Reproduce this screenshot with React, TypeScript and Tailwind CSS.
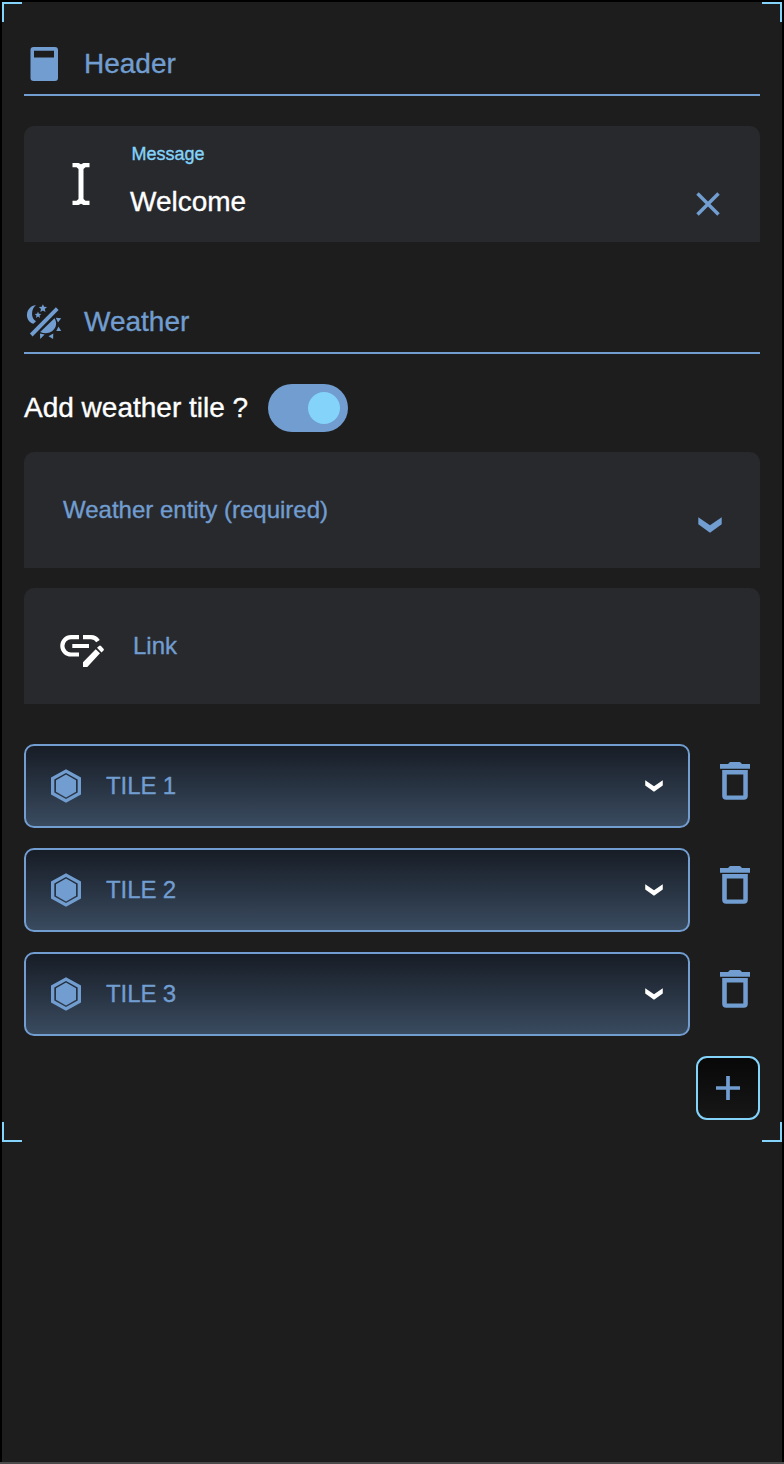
import React from "react";

const Corner = ({ className }: { className: string }) => (
  <span className={`absolute size-5 border-[#83d3fa] ${className}`} />
);

function SectionTitle({ icon, title }: { icon: React.ReactNode; title: string }) {
  return (
    <div className="flex h-[66px] items-start border-b-2 border-[#719dd0] text-[#719dd0]">
      <span className="flex size-10 shrink-0">{icon}</span>
      <h2 className="mt-5 ml-5 text-[28px] leading-7">{title}</h2>
    </div>
  );
}

const HeaderIcon = () => (
  <svg width="40" height="60" viewBox="0 0 40 60" className="shrink-0" fill="currentColor">
    <path fillRule="evenodd" d="M9.500 17H31a3 3 0 0 1 3 3V48a3 3 0 0 1-3 3H9.500a3 3 0 0 1-3-3V20a3 3 0 0 1 3-3ZM10 20.800V27.500H30V20.800Z" />
  </svg>
);

const WeatherIcon = () => (
  <svg width="40" height="60" viewBox="0 0 40 60" className="shrink-0" fill="currentColor">
    <path d="M12 17C1 18.500 0 33 9.500 35.800l2.500-2.600C6.500 30 7 21 12 17Z" />
    <path d="m18.900 16.200 1.200 2.600 2.900.3-2.200 1.900.7 2.900-2.600-1.500-2.600 1.500.7-2.900-2.200-1.900 2.900-.3ZM14 23.600l.9 2.200 2.400.2-1.800 1.600.6 2.300-2.100-1.300-2.100 1.300.6-2.300-1.800-1.600 2.400-.2Z" />
    <path d="m31.900 19.300 2.700 2.700L8.600 48.400 5.900 45.600Z" />
    <path d="M30.500 30.300c5.500 8.500-3.500 18.500-14.300 13.700ZM31.800 29.800l5.400.4-3.200 4.300ZM32.300 43l2.200-4.400 2.700 4.400ZM16 45.600l4.600 1-4.400 4.400ZM24.500 48.200l4.800-2.600-.2 5.400Z" />
  </svg>
);

const Chevron = ({ large = false }: { large?: boolean }) => (
  <svg width={large ? 24 : 18} height={large ? 16 : 12} viewBox="0 0 24 16" fill="currentColor">
    <path d="M.3.300 12 8.300 23.700.300V7.200L12 15.800.300 7.200Z" />
  </svg>
);

function Tile({ label }: { label: string }) {
  return (
    <div className="flex h-[84px] items-start text-[#719dd0]">
      <button className="flex h-full w-[666px] items-center rounded-[10px] border-2 border-[#719dd0] bg-linear-to-b from-[#171d26] to-[#3a4b60] pr-[25px] pl-6">
        <svg width="32" height="34" viewBox="0 0 32 34" fill="currentColor">
          <path fillRule="evenodd" d="M16 .2 31 8.500V25.500L16 33.800 1 25.500V8.500ZM16 4 4.300 10.500V23.500L16 30 27.700 23.500V10.500Z" />
          <path d="M16 5.500 26 11.200V22.800L16 28.500 6 22.800V11.200Z" />
        </svg>
        <span className="ml-6 text-2xl leading-6 tracking-[-0.1px]">{label}</span>
        <span className="ml-auto text-white"><Chevron /></span>
      </button>
      <button aria-label={`Delete ${label}`} className="mt-[17px] ml-[30px]">
        <svg width="30" height="40" viewBox="0 0 30 40" fill="currentColor">
          <path d="M0 3H8L10 1H20L22 3H30V7.700H0Z" />
          <path fillRule="evenodd" d="M2.200 9H27.800V34.700a4 4 0 0 1-4 4H6.200a4 4 0 0 1-4-4ZM6.800 13.500V34.500H23.300V13.500Z" />
        </svg>
      </button>
    </div>
  );
}

export default function App() {
  return (
    <div className="h-[1464px] w-[784px] border-x-2 border-t-2 border-black bg-[#1d1d1d] font-['Liberation_Sans',sans-serif] [-webkit-text-stroke:0.35px_currentColor]">
      <main className="relative h-[1140px] px-[22px] pt-7">
        <Corner className="top-0 left-0 border-t-2 border-l-2" />
        <Corner className="top-0 right-0 border-t-2 border-r-2" />
        <Corner className="bottom-0 left-0 border-b-2 border-l-2" />
        <Corner className="right-0 bottom-0 border-r-2 border-b-2" />

        <SectionTitle icon={<HeaderIcon />} title="Header" />
        <div className="mt-[30px] flex h-[116px] items-start rounded-t-[10px] bg-[#28292d]">
          <svg width="18" height="42" viewBox="0 0 18 42" className="mt-[37px] ml-12 text-white" fill="currentColor">
            <path d="M.5 0H6.500L9 1.300 11.500 0H17.500V4.300H13.500L11.500 6V36L13.500 37.700H17.500V42H11.500L9 40.700 6.500 42H.500V37.700H4.500L6.500 36V6L4.500 4.300H.500Z" />
          </svg>
          <div className="mt-[19px] ml-10 flex flex-col">
            <label className="ml-[1.500px] text-lg leading-[18px] text-[#83d3fa]">Message</label>
            <span className="mt-[25px] text-[28px] leading-7 text-white">Welcome</span>
          </div>
          <svg width="24" height="24" viewBox="0 0 24 24" className="mt-[66px] mr-10 ml-auto" fill="none" stroke="#719dd0" strokeWidth="3.500">
            <path d="m1.500 1.500 21 21m0-21-21 21" />
          </svg>
        </div>

        <div className="mt-[46px]">
          <SectionTitle icon={<WeatherIcon />} title="Weather" />
        </div>
        <div className="mt-[30px] flex h-12 items-center">
          <span className="text-[28px] leading-7 text-white">Add weather tile ?</span>
          <span className="ml-5 flex h-12 w-20 items-center justify-end rounded-full bg-[#719dd0] pr-2">
            <span className="size-8 rounded-full bg-[#83d3fa]" />
          </span>
        </div>
        <div className="mt-5 flex h-[116px] items-center justify-between rounded-t-[10px] bg-[#28292d] pr-[38px] pl-[39px] text-[#719dd0]">
          <span className="text-2xl leading-6">Weather entity (required)</span>
          <span className="mt-[29px]"><Chevron large /></span>
        </div>
        <div className="mt-5 flex h-[116px] items-center rounded-t-[10px] bg-[#28292d]">
          <svg width="44" height="32" viewBox="0 0 44 32" className="mt-[10px] ml-9" fill="none" stroke="white" strokeWidth="4.200">
            <path d="M19 2.200H11a8.650 8.650 0 0 0 0 17.300h8M23 2.200h8q4.500 0 7 4M12.300 11h16.700" />
            <path d="M35.700 14.300 40 18.300 27.300 32H23V27.300ZM37 12.800l2-1.900q1-.8 2 .1l2.500 2.700q.8.900 0 1.800l-2 1.900Z" fill="white" stroke="none" />
          </svg>
          <span className="ml-[29px] text-2xl leading-6 text-[#719dd0]">Link</span>
        </div>

        <div className="mt-10 flex flex-col gap-5">
          <Tile label="TILE 1" />
          <Tile label="TILE 2" />
          <Tile label="TILE 3" />
        </div>
        <button aria-label="Add tile" className="mt-5 ml-auto flex size-16 items-center justify-center rounded-[11px] border-2 border-[#83d3fa] bg-linear-to-b from-[#080808] to-[#171717]">
          <svg width="24" height="24" viewBox="0 0 24 24" fill="none" stroke="#719dd0" strokeWidth="3.700">
            <path d="M12 0V24M0 12H24" />
          </svg>
        </button>
      </main>
      <div className="-mx-0.5 mt-[320px] h-0.5 bg-[#4b4b4b]" />
    </div>
  );
}
